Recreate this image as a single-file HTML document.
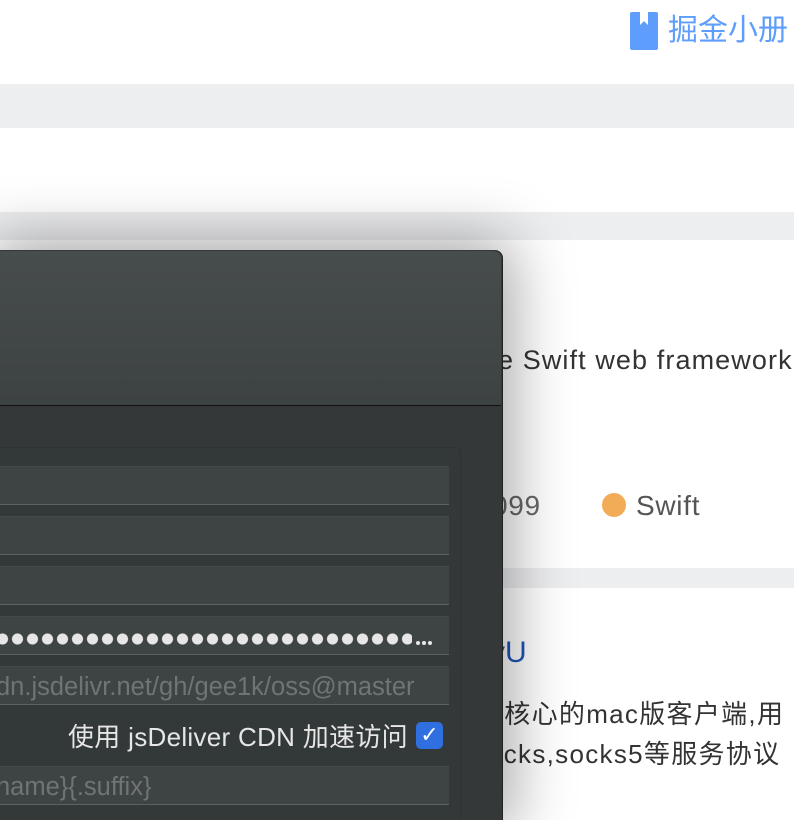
<!DOCTYPE html>
<html style="overflow:hidden;height:820px"><head><meta charset="utf-8"><style>
body{margin:0;width:794px;height:820px;position:relative;overflow:hidden;background:#fff;font-family:"Liberation Sans","Noto Sans CJK SC",sans-serif}
.a{position:absolute}
.band{position:absolute;left:0;width:794px;background:#edeef0}
.f{position:absolute;left:0;width:449px;height:37px;background:#3e4343;border-bottom:1px solid #5c6161;border-top:1px solid #434848;color:#6f7474;font-size:25.5px;line-height:40px;white-space:nowrap;overflow:hidden}
</style></head><body>
<div class="band" style="top:84px;height:44px"></div>
<div class="band" style="top:212px;height:28px"></div>
<div class="band" style="top:568px;height:20px"></div>
<div class="a" style="left:630px;top:12px;width:28px;height:38px;background:#5e9dfb;border-radius:2px"></div>
<div class="a" style="left:640px;top:12px;width:8px;height:13px;background:#fff;clip-path:polygon(0 0,100% 0,100% 100%,50% 70%,0 100%)"></div>
<div class="a" style="left:668px;top:11px;font-size:30px;color:#5e9dfb;line-height:40px">掘金小册</div>
<div class="a" style="left:498px;top:345px;font-size:27px;letter-spacing:1.1px;color:#333;white-space:nowrap">e Swift web framework</div>
<div class="a" style="left:492px;top:490px;font-size:28px;letter-spacing:0.7px;color:#666">099</div>
<div class="a" style="left:602px;top:493px;width:24px;height:24px;border-radius:50%;background:#f2ac58"></div>
<div class="a" style="left:636px;top:490px;font-size:28px;letter-spacing:0.7px;color:#555">Swift</div>
<div class="a" style="left:490px;top:636px;font-size:30px;color:#1d56b8">vU</div>
<div class="a" style="left:490px;top:694px;font-size:26px;letter-spacing:1.3px;color:#333;white-space:nowrap">y核心的mac版客户端,用</div>
<div class="a" style="left:488px;top:734px;font-size:26px;letter-spacing:1.3px;color:#333;white-space:nowrap">ocks,socks5等服务协议</div>
<div class="a" style="left:0;top:250px;width:502px;height:570px;border-radius:0 8px 0 0;background:#343838;box-shadow:0 0 60px 10px rgba(0,0,0,.35);border-right:1px solid #222"></div>
<div class="a" style="left:0;top:251px;width:501px;height:154px;border-radius:0 8px 0 0;background:linear-gradient(#474c4d,#3d4242);border-bottom:1px solid #111"></div>
<div class="a" style="left:0;top:447px;width:460px;height:373px;background:#333838;border-top:1px solid #2f3333;border-right:1px solid #2f3333;border-radius:0 4px 0 0"></div>
<div class="f" style="top:466px"></div>
<div class="f" style="top:516px"></div>
<div class="f" style="top:566px"></div>
<div class="f" style="top:616px"></div>
<div class="a" style="left:-5px;top:632px;width:417px;height:14px;background:radial-gradient(circle at 7.5px 7px,#e6e6e6 5.2px,transparent 5.9px);background-size:15px 14px"></div>
<div class="a" style="left:415px;top:628px;width:18px;height:6px;background:radial-gradient(circle at 3px 3px,#e6e6e6 1.8px,transparent 2.3px);background-size:6px 6px;margin-top:12px"></div>
<div class="f" style="top:666px;text-indent:-4px">dn.jsdelivr.net/gh/gee1k/oss@master</div>
<div class="a" style="left:68px;top:717px;font-size:26px;letter-spacing:0.3px;color:#e6e6e6;white-space:nowrap">使用 jsDeliver CDN 加速访问</div>
<div class="a" style="left:416px;top:722px;width:27px;height:27px;border-radius:5px;background:#2f6fe0;color:#fff;font-size:22px;line-height:27px;text-align:center;font-family:'DejaVu Sans',sans-serif">✓</div>
<div class="f" style="top:766px;text-indent:-4px">name}{.suffix}</div>
</body></html>
